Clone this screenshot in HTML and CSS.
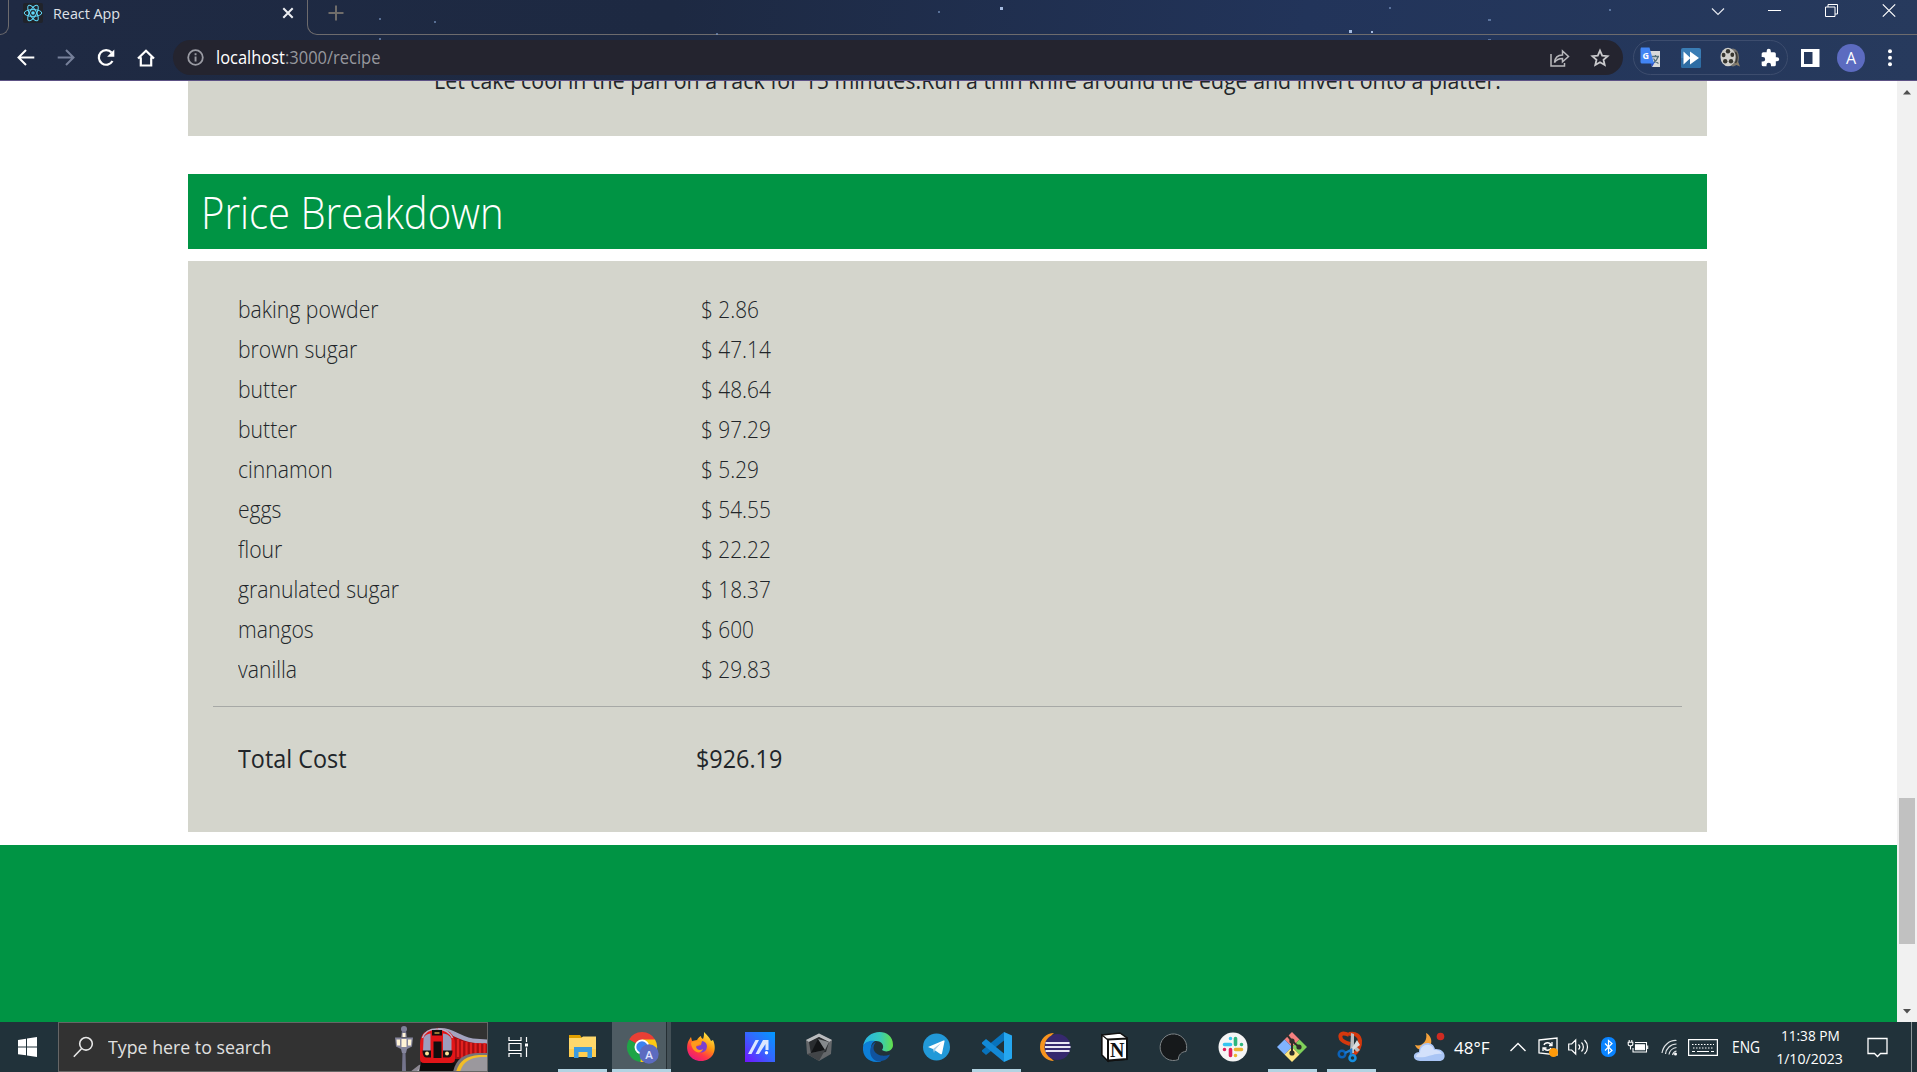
FILE: index.html
```
<!DOCTYPE html>
<html lang="en">
<head>
<meta charset="utf-8">
<title>React App</title>
<link rel="stylesheet" href="styles.css">
</head>
<body>
<div class="screen">
  <header class="browser">
    <svg class="stars" width="1917" height="80" fill="#7f9cc9">
      <g opacity=".6"><rect x="379" y="18" width="2" height="2"/><rect x="434" y="21" width="2" height="2"/><rect x="379" y="38" width="2" height="2"/><rect x="716" y="33" width="2" height="2"/><rect x="938" y="11" width="2" height="2"/><rect x="1389" y="7" width="2" height="2"/><rect x="1488" y="19" width="3" height="2"/><rect x="1488" y="39" width="3" height="1"/><rect x="1609" y="9" width="2" height="2"/></g>
      <g fill="#a5bbe0"><rect x="1000" y="7" width="3" height="3"/><rect x="1349" y="30" width="3" height="3"/><rect x="1371" y="31" width="2" height="2"/></g>
    </svg>
    <div class="tabs">
      <div class="tab-prev"></div>
      <div class="tab">
        <svg width="20" height="20" viewBox="0 0 20 20"><rect width="20" height="20" rx="2" fill="#20232a"/><g fill="none" stroke="#61dafb" stroke-width="1"><ellipse cx="10" cy="10" rx="8.8" ry="3.4"/><ellipse cx="10" cy="10" rx="8.8" ry="3.4" transform="rotate(60 10 10)"/><ellipse cx="10" cy="10" rx="8.8" ry="3.4" transform="rotate(120 10 10)"/></g><circle cx="10" cy="10" r="1.8" fill="#61dafb"/></svg>
        <span class="tab-title">React App</span>
        <svg class="tab-close" width="12" height="12" viewBox="0 0 12 12" stroke="#eceef2" stroke-width="2"><path d="M1.3 1.3l9.4 9.4M10.7 1.3l-9.4 9.4"/></svg>
      </div>
      <div class="tab-rest">
        <svg width="16" height="16" viewBox="0 0 16 16" stroke="#706d6a" stroke-width="2"><path d="M8 .5v15M.5 8h15"/></svg>
        <div class="window-controls">
          <svg width="14" height="16" viewBox="0 0 14 16" fill="none" stroke="#e4e7ee" stroke-width="1.2"><path d="M1 5.5l6 6 6-6"/></svg>
          <svg width="14" height="16" viewBox="0 0 14 16" fill="#fff"><path d="M0 7h13v1H0z"/></svg>
          <svg width="14" height="16" viewBox="0 0 14 16" fill="none" stroke="#fff"><path d="M.5 4h9.500v9.500H.5zM3 4V1.500h9.500V11H10"/></svg>
          <svg width="14" height="16" viewBox="0 0 14 16" fill="none" stroke="#fff" stroke-width="1.200"><path d="M.8 1.300l12.400 12.400M13.200 1.300L.8 13.700"/></svg>
        </div>
      </div>
    </div>
    <div class="toolbar">
      <nav class="nav">
        <svg width="20" height="20" viewBox="0 0 20 20" fill="none" stroke="#fff" stroke-width="2"><path d="M18.300 9.500H3M10 2L2.500 9.500 10 17"/></svg>
        <svg width="20" height="20" viewBox="0 0 20 20" fill="none" stroke="#76809a" stroke-width="2"><path d="M1.700 9.500H17M10 2l7.500 7.500L10 17"/></svg>
        <svg width="20" height="20" viewBox="0 0 20 20"><path d="M16.500 13A7.300 7.300 0 1 1 15.600 4.600" fill="none" stroke="#fff" stroke-width="2.200"/><path d="M18.300 1.500v7.200h-7.200z" fill="#fff"/></svg>
        <svg width="20" height="20" viewBox="0 0 20 20" fill="none" stroke="#fff" stroke-width="2.200"><path d="M4.800 9.500v8h10.400v-8M2 10.500l8-7.800 8 7.800M3.500 9.700h2M14.500 9.700h2"/></svg>
      </nav>
      <div class="address">
        <svg width="17" height="17" viewBox="0 0 17 17"><circle cx="8.500" cy="8.500" r="7.300" fill="none" stroke="#9a9ba3" stroke-width="1.800"/><path d="M7.600 7.500h1.900v5H7.600zM7.600 4.300h1.900v1.900H7.600z" fill="#9a9ba3"/></svg>
        <span class="url"><b>localhost</b>:3000/recipe</span>
        <svg class="share" width="20" height="18" viewBox="0 0 20 18" fill="none" stroke="#b9b9bd" stroke-width="1.500"><path d="M1 5v12h13.500v-3M4.500 13.500c.5-5 3-7.500 8-7.500V2l6 5.500-6 5.300V9.500c-4 0-6 1-8 4z"/></svg>
        <svg class="star" width="20" height="20" viewBox="0 0 20 20" fill="none" stroke="#c9c9cc" stroke-width="1.800"><path d="M10 2.600l2.200 5 5.400.5-4.100 3.600 1.200 5.300L10 14.200 5.300 17l1.200-5.300-4.100-3.600 5.400-.5z"/></svg>
      </div>
      <div class="extensions">
        <svg width="21" height="21" viewBox="0 0 21 21"><path d="M9 4h11v16H12z" fill="#d8dadb"/><path d="M12 9.500h7M15.500 8v2M18 10c-1 3-3 5-5 6M13.500 11.500c1 2 3 4 5 5" stroke="#55717b" stroke-width="1.300" fill="none"/><path d="M10 15h5l-3 5z" fill="#2a4dbb"/><path d="M1 .5h8.500L14 16.500H2a1.500 1.500 0 0 1-1.500-1.500V2z" fill="#4285f4"/><text x="2.600" y="12" class="g-letter">G</text></svg>
        <svg width="20" height="20" viewBox="0 0 20 20"><rect width="20" height="20" rx="2" fill="#3a7db5"/><path d="M0 10h20v8a2 2 0 0 1-2 2H2a2 2 0 0 1-2-2z" fill="#2e6da4"/><path d="M2.500 3.500l7 6.500-7 6.500zM9 3.500l9 6.500-9 6.500z" fill="#fff"/></svg>
        <svg width="20" height="21" viewBox="0 0 20 21"><ellipse cx="13" cy="10.500" rx="6" ry="9" fill="#777570"/><path d="M14 17l6 2.500-2-5z" fill="#8b7f6b"/><ellipse cx="8" cy="10" rx="7.500" ry="9.300" fill="#d0cfcb"/><path d="M15.500 5c2 3 2 8 0 11" stroke="#3a3936" stroke-width="1.500" fill="none"/><g fill="#36352f"><ellipse cx="8" cy="4.200" rx="2.200" ry="2.200"/><ellipse cx="3.600" cy="8" rx="1.900" ry="2.300"/><ellipse cx="12.300" cy="7.800" rx="1.900" ry="2.300"/><ellipse cx="5.200" cy="14.200" rx="2.200" ry="2.300"/><ellipse cx="11" cy="14.200" rx="2.200" ry="2.300"/></g></svg>
        <svg width="20" height="20" viewBox="0 0 24 24" fill="#fff"><path d="M20.500 11H19V7a2 2 0 0 0-2-2h-4V3.500a2.500 2.500 0 0 0-5 0V5H4a2 2 0 0 0-2 2v3.800h1.500a2.700 2.700 0 0 1 0 5.400H2V20a2 2 0 0 0 2 2h3.800v-1.500a2.700 2.700 0 0 1 5.400 0V22H17a2 2 0 0 0 2-2v-4h1.500a2.500 2.500 0 0 0 0-5z"/></svg>
      </div>
      <svg class="side-panel" width="19" height="18" viewBox="0 0 19 18"><path fill="#fff" fill-rule="evenodd" d="M0 0h18.500v18H0zM3 3v12h8.500V3z"/></svg>
      <div class="avatar">A</div>
      <svg class="menu-dots" width="6" height="20" viewBox="0 0 6 20" fill="#fff"><circle cx="3" cy="3.300" r="2"/><circle cx="3" cy="9.800" r="2"/><circle cx="3" cy="16.300" r="2"/></svg>
    </div>
  </header>

  <div class="viewport">
    <main class="page">
      <section class="directions"><p>Let cake cool in the pan on a rack for 15 minutes.Run a thin knife around the edge and invert onto a platter.</p></section>
      <h1 class="heading"><span>Price Breakdown</span></h1>
      <section class="breakdown">
        <dl class="prices">
          <dt>baking powder</dt><dd>$ 2.86</dd>
          <dt>brown sugar</dt><dd>$ 47.14</dd>
          <dt>butter</dt><dd>$ 48.64</dd>
          <dt>butter</dt><dd>$ 97.29</dd>
          <dt>cinnamon</dt><dd>$ 5.29</dd>
          <dt>eggs</dt><dd>$ 54.55</dd>
          <dt>flour</dt><dd>$ 22.22</dd>
          <dt>granulated sugar</dt><dd>$ 18.37</dd>
          <dt>mangos</dt><dd>$ 600</dd>
          <dt>vanilla</dt><dd>$ 29.83</dd>
        </dl>
        <hr>
        <div class="total"><span>Total Cost</span><span>$926.19</span></div>
      </section>
      <footer class="page-footer"></footer>
    </main>
    <div class="scrollbar">
      <svg width="8" height="5" viewBox="0 0 8 5"><path d="M4 0l4 4.500H0z" fill="#505050"/></svg>
      <div class="thumb"></div>
      <svg width="8" height="5" viewBox="0 0 8 5"><path d="M0 0h8L4 4.500z" fill="#505050"/></svg>
    </div>
  </div>

  <div class="taskbar">
    <div class="start"><svg width="19" height="20" viewBox="0 0 19 20" fill="#fff"><path d="M0 3l8-1.200v7.700H0zM9 1.600L19 0v9.500H9zM0 10.500h8v7.800L0 17.200zM9 10.500h10V20L9 18.500z"/></svg></div>
    <div class="search">
      <svg width="22" height="22" viewBox="0 0 22 22" fill="none" stroke="#e8e8e8" stroke-width="1.600"><circle cx="13" cy="7.800" r="6.300"/><path d="M8.700 12.500L.8 20.800"/></svg>
      <span>Type here to search</span>
      <svg class="train" width="88" height="49" viewBox="10 0 88 49">
        <path d="M8 49l9-7 11-3-4 10z" fill="#8d8994"/><path d="M14 49l8-8 4 8z" fill="#b9b5bd"/>
        <path d="M48 30h50v19H52z" fill="#1d1716"/>
        <path d="M34 5c12-2 22 11 37 14l27 2v15H48z" fill="#a50f12"/>
        <path d="M36 5c14-1 22 8 35 10.500l27 2v3.500l-25-1C56 18 50 10 36 8z" fill="#a4a4c0"/>
        <path d="M56 16v18M60 18v17M64.500 19v17M69 20v15M73.500 20v13M78 20v12M82.500 20v11M87 20v10" stroke="#e4211f" stroke-width="2.200"/>
        <path d="M19 39h33l3 10H17z" fill="#0d0c0c"/>
        <path d="M18 22C18 10 24 6 35 6s18 4 18 16v14c0 3-2 4-4 4H22c-3 0-4-2-4-4z" fill="#e21518"/>
        <path d="M20.500 15c2-6 7-9 14.500-9s12.500 3 15.500 9" fill="none" stroke="#b3b3cc" stroke-width="1.500"/>
        <path d="M21.500 17c0-4 3-6 7-6.500V28h-7.500zM41 10.500c5 .5 8 3 8.500 6.500V28H41z" fill="#9d9dbd"/>
        <path d="M20.500 27.500H29v7h-5c-2 0-3.500-3-3.500-7zM41 27.500h9.500c0 4-1.500 7-3.500 7h-6z" fill="#151212"/>
        <path d="M30 7h10v5.500H30zM31.500 18.500h8v16.500h-8z" fill="#120e0e"/><path d="M32.500 10h5" stroke="#c59b40" stroke-width="1.500"/>
        <circle cx="25" cy="30.500" r="2" fill="#ffe39a"/><circle cx="45" cy="30.500" r="2" fill="#ffe39a"/>
        <path d="M51 49c3-13 10-18 24-19h23v19z" fill="#77747a"/><path d="M54 49c3-11 10-16 23-17h21v17z" fill="#f2bd26"/><path d="M58 49c3-10 9-14 21-15h19v15z" fill="#9b989d"/>
      </svg>
      <svg class="lamp" width="20" height="49" viewBox="0 0 20 49"><circle cx="10" cy="6" r="3" fill="#80809a"/><path d="M8 8h4l1 6H7zM8.500 28h3L12 49H8z" fill="#74748c"/><path d="M1 14.500h18l-1 9-5 2.500-1 4H8l-1-4-5-2.500z" fill="#85859c"/><path d="M2.500 16.500h3.500v6H3zM7.500 16h5v8h-5zM14 16.500h3.500l-.5 6h-3zM8.500 10h3v4h-3z" fill="#fff3d6"/></svg>
    </div>
    <div class="task-view"><svg width="21" height="20" viewBox="0 0 21 20" fill="none" stroke="#fff" stroke-width="1.200"><path d="M1 0v3.500h12V0M1 6.500h12v7H1zM1 20v-3.500h12V20M18.500 0v5M18.500 10.500V20"/><path d="M17 6.500h3v3h-3z" fill="#fff" stroke="none"/></svg></div>
    <div class="apps">
      <div class="app open"><svg width="30" height="30" viewBox="0 0 30 30"><path d="M1 3h11l2 3H1z" fill="#e1a000"/><path d="M1 6h12l2-1.500h13V25H1z" fill="#ffd86b"/><path d="M1 17h27v8H1z" fill="#ffcd4d"/><path d="M6 15h18v11h-4.500v-6h-9v6H6z" fill="#3c9ade"/></svg></div>
      <div class="app open active"><svg width="30" height="30" viewBox="0 0 30 30"><path d="M15 15L2 7.500A15 15 0 0 1 28 7.500z" fill="#ea3f35"/><path d="M15 15L2 7.500A15 15 0 0 0 15 30l7-9z" fill="#1ea446"/><path d="M15 15l-1.500 15A15 15 0 0 0 28 7.500H15z" fill="#fdc913"/><circle cx="15" cy="15" r="7.500" fill="#fff"/><circle cx="15" cy="15" r="5.700" fill="#3b82f0"/><circle cx="22" cy="22" r="9.700" fill="#5c6bc0"/><text x="22" y="26.500" class="badge">A</text></svg></div>
      <div class="app"><svg width="30" height="30" viewBox="0 0 30 30"><defs><linearGradient id="fx" x1=".8" y1="0" x2=".2" y2="1"><stop offset="0" stop-color="#fff44f"/><stop offset=".4" stop-color="#ff980e"/><stop offset=".7" stop-color="#ff3647"/><stop offset="1" stop-color="#e31587"/></linearGradient></defs><path d="M18 0c4 4 6 6 7 9l2-1c5 11-1 21-12 21C4 29-1 19 2 10c1-2 2-4 3-5l1 4 5-1c1-2 2-3 4-4 0 2 1 2 2 3 1-2 1-5 1-7z" fill="url(#fx)"/><path d="M9 15l6-2 1-4c5 1 6 5 4 9-3 4-9 3-11-3z" fill="#7b3fd0"/><path d="M5 11c3-3 8-1 10-1-1 3-4 3-5 4 0 4 4 5 7 3-2 6-11 4-12-6z" fill="#ff9a1c"/></svg></div>
      <div class="app"><svg width="30" height="30" viewBox="0 0 30 30"><defs><linearGradient id="ma" x1="0" y1="1" x2="1" y2="0"><stop offset="0" stop-color="#7312ff"/><stop offset=".5" stop-color="#3566ff"/><stop offset="1" stop-color="#009bff"/></linearGradient></defs><path d="M0 0h30v30H0z" fill="url(#ma)"/><path d="M3 22L10.500 8h3.500L6.500 22zM10.500 22L18 8h5.500v10h-3v-6L14 22z" fill="#dbe7ff"/><circle cx="21.500" cy="20.800" r="1.700" fill="#fff"/></svg></div>
      <div class="app"><svg width="30" height="30" viewBox="0 0 30 30"><path d="M15 1.500L28 8l-1 14-12 7L3 22 2 8z" fill="#65686b"/><path d="M15 1.500L28 8l-3 2-10-5L5 10 2 8z" fill="#b9bcbf"/><path d="M15 5l10 5-3 10-15 2-2-12z" fill="#2a2d30"/><path d="M14 7L7 21l14-3z" fill="#131517"/><path d="M14 7l7 11 4-8z" fill="#85898c"/><path d="M7 21l14-3-6 11-12-7z" fill="#424548"/></svg></div>
      <div class="app"><svg width="30" height="30" viewBox="0 0 30 30"><defs><linearGradient id="eg"><stop offset="0" stop-color="#27b2e8"/><stop offset=".55" stop-color="#35c9bd"/><stop offset="1" stop-color="#64e04a"/></linearGradient></defs><path d="M0 15C2-4 30-5 30 13c0 6-7 8-11 5 3-4 0-9-6-9-6 0-12 2-13 6z" fill="url(#eg)"/><path d="M0 15c1-5 7-7 12-6-4 2-5 7-3 12 2 4 6 6 9 8.500C7 32-1 25 0 15z" fill="#0d7fd8"/><path d="M13 10c-7 8 2 17 14 12.500-2 5-7 7-12 7C5 27 5 13 13 10z" fill="#10539e"/></svg></div>
      <div class="app"><svg width="30" height="30" viewBox="0 0 30 30"><circle cx="14.500" cy="15" r="13.500" fill="#2299d8"/><path d="M6 15l15.500-6.500c1-.3 1.300.2 1 1L20 21.500c-.3 1-1 1-1.700.5L11 17z" fill="#fff"/><path d="M11 17l8-6-6 7-1 3z" fill="#a9cde6"/></svg></div>
      <div class="app open"><svg width="30" height="30" viewBox="0 0 30 30"><path d="M22 0l8 3.500v23L22 30z" fill="#25a7f0"/><path d="M22 0v8.500L4 23l-4-3.500v-1.200z" fill="#0873bd"/><path d="M22 30v-8.500L4 7 0 10.500v1.300z" fill="#1389d6"/></svg></div>
      <div class="app"><svg width="30" height="30" viewBox="0 0 30 30"><path d="M13 1a14 14 0 0 0 0 28C5 23 5 7 13 1z" fill="#f7941e"/><circle cx="16.500" cy="15" r="13" fill="#36296e"/><path d="M4.500 11h24M4 15h25.500M4.500 19h24" stroke="#e9e7f3" stroke-width="1.900"/></svg></div>
      <div class="app"><svg width="30" height="30" viewBox="0 0 30 30"><path d="M2 3l18-2 7 5v21l-19 2-6-6z" fill="#fff" stroke="#111" stroke-width="1.500"/><path d="M2 3l6 5v21l-6-6z" fill="#fff" stroke="#111" stroke-width="1.300"/><path d="M8 7.500l19-1V27L8 28.500z" fill="#fff" stroke="#111" stroke-width="2"/><text x="10" y="24.500" class="notion-letter">N</text></svg></div>
      <div class="app"><svg width="30" height="30" viewBox="0 0 30 30"><path d="M27 19.500A13.300 13.300 0 1 0 19.500 27.500c-.5-4 3-8 7.500-8z" fill="#16191b" stroke="#7d8386"/></svg></div>
      <div class="app"><svg width="30" height="30" viewBox="0 0 30 30"><circle cx="15" cy="15" r="14.500" fill="#f5f5f5"/><g stroke-width="3.600" stroke-linecap="round"><path d="M12.500 6.500v0M6.500 12.500h6" stroke="#36c5f0"/><path d="M17.500 6.500v6M23.500 12.500v0" stroke="#2eb67d"/><path d="M17.500 17.500h6M17.500 23.500v0" stroke="#ecb22e"/><path d="M12.500 17.500v6M6.500 17.500v0" stroke="#e01e5a"/></g></svg></div>
      <div class="app open"><svg width="30" height="30" viewBox="0 0 30 30"><path d="M15 0l7.500 7.500L15 15 7.500 7.500z" fill="#f48080"/><path d="M7.500 7.500L15 15l-7.500 7.500L0 15z" fill="#80b3ff"/><path d="M22.500 7.500L30 15l-7.500 7.500L15 15z" fill="#7fd15a"/><path d="M15 15l7.500 7.500L15 30l-7.500-7.500z" fill="#ffe680"/><path d="M10 3l5 6v12M15 9l7 6" stroke="#302f2b" stroke-width="2" fill="none"/><g fill="#302f2b"><circle cx="15" cy="9" r="2.600"/><circle cx="22" cy="15" r="2.600"/><circle cx="15" cy="21" r="2.600"/></g></svg></div>
      <div class="app open"><svg width="30" height="30" viewBox="0 0 30 30"><path d="M13 3C6 0 3 2 5 7c2 3 6 4 9 5M13 2c14-3 14 14 4 21" fill="none" stroke="#d4380d" stroke-width="4"/><path d="M15 1l3 1v19h-4zM19 13l5 5-3 2-4-4z" fill="#b9bdc0"/><path d="M17 18L24 13l-3-5-5 8z" fill="#dadddf"/><circle cx="6" cy="22" r="3.300" fill="none" stroke="#0b62b8" stroke-width="2.500"/><circle cx="16.500" cy="26" r="3" fill="none" stroke="#168fe0" stroke-width="2.500"/><path d="M9 21l6-3v5" fill="none" stroke="#1c7bd0" stroke-width="2.500"/></svg></div>
    </div>
    <div class="tray">
      <div class="slot weather"><svg width="31" height="30" viewBox="0 0 31 30"><path d="M12 1c8 4 7 16-3 17-4 0-7-2-8-5 7 2 13-4 11-12z" fill="#f5a23b"/><path d="M6 29c-8 0-8-9-1-9 0-11 14-12 16-3 11-1 13 12 4 12z" fill="#a9c5f5"/><path d="M6 21c0-10 12-11 14-3 3 0 6 0 8 4-7-2-16 5-26 3 0-2 2-4 4-4z" fill="#d3e1fb"/><circle cx="26.500" cy="4.500" r="3.800" fill="#cf2b22"/></svg></div>
      <div class="slot temp"><span>48°F</span></div>
      <div class="slot chev"><svg width="16" height="10" viewBox="0 0 16 10" fill="none" stroke="#fff" stroke-width="1.400"><path d="M.5 9L8 1.500 15.500 9"/></svg></div>
      <div class="slot update"><svg width="21" height="20" viewBox="0 0 21 20" fill="none" stroke="#fff" stroke-width="1.300"><path d="M1 3l18-2v17L1 16z"/><path d="M6 8c1-3 6-3 7 0M14 5v3.500h-3M13 11c-1 3-6 3-7 0M5 14v-3h3.500"/><circle cx="15.500" cy="15.500" r="4.500" fill="#ff9b0a" stroke="none"/></svg></div>
      <div class="slot sound"><svg width="21" height="16" viewBox="0 0 21 16" fill="none" stroke="#fff" stroke-width="1.200"><path d="M.7 5h3l4-4v14l-4-4h-3zM10.500 5.500c1.500 1.500 1.500 3.500 0 5M13.500 3.500c2.500 2.500 2.500 6.500 0 9M16.500 1c4 4 4 10 0 14"/></svg></div>
      <div class="slot bt"><svg width="15" height="20" viewBox="0 0 15 20"><rect width="15" height="20" rx="7" fill="#0a84ff"/><path d="M4 6.500l7 7-3.500 3v-13l3.500 3-7 7" fill="none" stroke="#fff" stroke-width="1.200"/></svg></div>
      <div class="slot battery"><svg width="21" height="15" viewBox="0 0 21 15" fill="none" stroke="#fff" stroke-width="1.100"><path d="M7 2.500h11.500v9.500H5V8M19.700 5.500v3.500"/><path d="M7.500 4.800H16.500v5H7.500z" fill="#fff"/><path d="M1.200 0v2M3.800 0v2M.2 2.300h4.600v2c0 1-1 1.500-2.300 1.500S.2 5.300.2 4.300zM2.500 6v3.500"/></svg></div>
      <div class="slot wifi"><svg width="17" height="17" viewBox="0 0 17 17" fill="none" stroke="#dfe3e5" stroke-width="1.200"><path d="M1 14C2 7 8 1 15.500 1.500M4.500 15C5 9.500 9.500 5 15.500 5M8 15.500c.5-3.500 3.500-6.500 7.500-7M11.500 16c.5-2 2-3.500 4-4"/><circle cx="14.500" cy="15" r="1.500" fill="#fff" stroke="none"/></svg></div>
      <div class="slot keyboard"><svg width="30" height="17" viewBox="0 0 30 17" fill="none" stroke="#fff" stroke-width="1.200"><path d="M.6.6h28.800v15.800H.6z"/><path d="M4 5.500h22M5 9h20" stroke-dasharray="1.500 1.500"/><path d="M4 12.500h3M9 12.500h12M23 12.500h3"/></svg></div>
      <div class="slot lang"><span>ENG</span></div>
      <div class="clock"><span>11:38 PM</span><span class="date">1/10/2023</span></div>
      <svg class="notices" width="21" height="21" viewBox="0 0 21 21" fill="none" stroke="#fff" stroke-width="1.300"><path d="M1 1.500h19v15h-6.500l-3 3-3-3H1z"/></svg>
      <div class="peek"></div>
    </div>
  </div>
</div>
</body>
</html>
```
FILE: styles.css
```
* { box-sizing: border-box; }
body { margin: 0; font-family: "Open Sans", "Noto Sans", sans-serif; color: #212529; }
svg { display: block; flex: none; overflow: visible; }
.screen { width: 1917px; height: 1072px; display: flex; flex-direction: column; overflow: hidden; }

/* browser chrome */
.browser { position: relative; height: 81px; flex: none; background: linear-gradient(95deg, #1f2a43 0%, #1d2942 35%, #22345a 68%, #273a5d 100%); border-bottom: 1px solid #5d5285; }
.stars { position: absolute; left: 0; top: 0; }
.tabs { display: flex; height: 35px; }
.tab-prev { width: 9px; border: solid #6d6b6d; border-width: 0 1px 1px 0; border-bottom-right-radius: 10px; }
.tab { width: 298px; height: 24px; padding: 2px 13px 0 14px; display: flex; align-items: center; }
.tab-title { margin-left: 10px; margin-top: -1px; font-size: 15px; line-height: 20px; color: #dfe2e8; transform: scaleX(.955); transform-origin: 0 0; }
.tab-close { margin-left: auto; }
.tab-rest { flex: 1; display: flex; justify-content: space-between; padding: 5px 0 0 20px; border: solid #6d6b6d; border-width: 0 0 1px 1px; border-bottom-left-radius: 10px; }
.window-controls { width: 228px; display: grid; grid-template-columns: repeat(4, 1fr); justify-items: center; margin-top: -2px; height: 16px; }
.toolbar { display: flex; align-items: center; height: 45px; padding-left: 6px; }
.nav { width: 160px; display: grid; grid-template-columns: repeat(4, 1fr); justify-items: center; }
.address { width: 1450px; height: 35px; margin-left: 7px; padding: 0 13px 0 14px; display: flex; align-items: center; border-radius: 18px; background: #24242f; }
.url { margin-left: 12px; margin-top: -1px; font-size: 18px; color: #96979d; white-space: nowrap; transform: scaleX(.915); transform-origin: 0 0; }
.url b { font-weight: 400; color: #fff; }
.share { margin-left: auto; }
.star { margin-left: 20px; }
.extensions { width: 155px; height: 35px; margin-left: 10px; padding: 0 7px 0 6px; display: flex; align-items: center; justify-content: space-between; border: 1px solid #3d4d6e; border-radius: 18px; }
.g-letter { font: 700 9px "Open Sans", sans-serif; fill: #fff; }
.side-panel { margin-left: 13px; }
.avatar { width: 28px; height: 28px; margin-left: 17px; border-radius: 50%; background: #5c6bc0; color: #fff; font-size: 16px; line-height: 28px; text-align: center; }
.menu-dots { margin-left: 22px; }

/* page */
.viewport { display: flex; flex: 1; min-height: 0; }
.page { flex: 1; display: flex; flex-direction: column; overflow: hidden; background: #fff; }
.directions, .heading, .breakdown { width: 1519px; margin-left: 188px; flex: none; }
.directions { height: 55px; background: #d4d5cc; padding-left: 246px; overflow: hidden; }
.directions p { margin: -16px 0 0; font-size: 23px; line-height: 30px; white-space: nowrap; transform: scaleX(.928); transform-origin: 0 0; }
.heading { height: 75px; margin-top: 38px; margin-bottom: 0; padding: 0 13px; background: #009444; color: #fff; font-size: 45px; font-weight: 300; line-height: 75px; }
.heading span { display: inline-block; transform: scaleX(.89); transform-origin: 0 0; }
.breakdown { height: 571px; margin-top: 12px; padding: 28px 25px 0; background: #d4d5cc; }
.prices { margin: 0; display: grid; grid-template-columns: 463px 1fr; padding-left: 25px; font-size: 23px; font-weight: 300; line-height: 40px; }
.prices dt, .prices dd { margin: 0; transform: scaleX(.92); transform-origin: 0 0; }
.prices dd { transform: scaleX(.905); }
.breakdown hr { height: 1px; margin: 17px 0 31px; border: 0; background: #a7a9a6; }
.total { display: grid; grid-template-columns: 458px 1fr; padding-left: 25px; font-size: 25px; line-height: 40px; }
.total span { transform: scaleX(.935); transform-origin: 0 0; }
.page-footer { margin-top: 13px; flex: 1; background: #009444; }
.scrollbar { width: 20px; background: #f1f1f1; display: flex; flex-direction: column; align-items: center; padding: 9px 0 8px; }
.thumb { width: 16px; height: 146px; margin-top: 703px; margin-bottom: auto; background: #c1c1c1; }

/* taskbar */
.taskbar { height: 50px; flex: none; display: flex; background: #21323a; color: #fff; }
.start { width: 58px; padding: 15px 0 0 18px; }
.search { position: relative; width: 430px; padding-left: 14px; display: flex; align-items: center; background: #323232; border: 1px solid #666; overflow: hidden; }
.search span { margin-left: 13px; font-size: 19px; color: #e0e0e0; white-space: nowrap; transform: scaleX(.935); transform-origin: 0 0; }
.train { position: absolute; left: 353px; top: 0; }
.lamp { position: absolute; left: 335px; top: 0; }
.task-view { width: 65px; padding: 15px 0 0 20px; }
.apps { width: 828px; display: grid; grid-template-columns: repeat(14, 1fr); }
.app { display: flex; justify-content: center; margin: 0 5px; padding-top: 10px; border-bottom: 3px solid transparent; }
.app.open { border-color: #b3d3e2; }
.app.active { margin: 0; background: linear-gradient(90deg, #4e5c63 0 54px, #252f34 54px 55px, #435056 55px); }
.badge { font: 600 11.500px "Open Sans", sans-serif; fill: #dfe3ff; text-anchor: middle; }
.notion-letter { font: 700 20px "Liberation Serif", serif; fill: #111; }
.tray { flex: 1; display: flex; align-items: center; padding-left: 33px; }
.slot { display: flex; align-items: center; white-space: nowrap; }
.weather { width: 40px; }
.temp { width: 56px; font-size: 17px; }
.chev { width: 28px; }
.update { width: 30px; }
.sound { width: 33px; }
.bt { width: 27px; }
.battery { width: 33px; }
.wifi { width: 27px; }
.keyboard { width: 44px; }
.lang { width: 45px; font-size: 16px; }
.lang span { transform: scaleX(.86); transform-origin: 0 0; }
.clock { width: 66px; display: flex; flex-direction: column; align-items: center; font-size: 15px; line-height: 23px; white-space: nowrap; }
.clock span { transform: scaleX(.91); }
.clock .date { transform: scaleX(.94); }
.notices { margin-left: 24px; }
.peek { width: 1px; height: 50px; margin-left: 23px; background: #8b9599; }
```
